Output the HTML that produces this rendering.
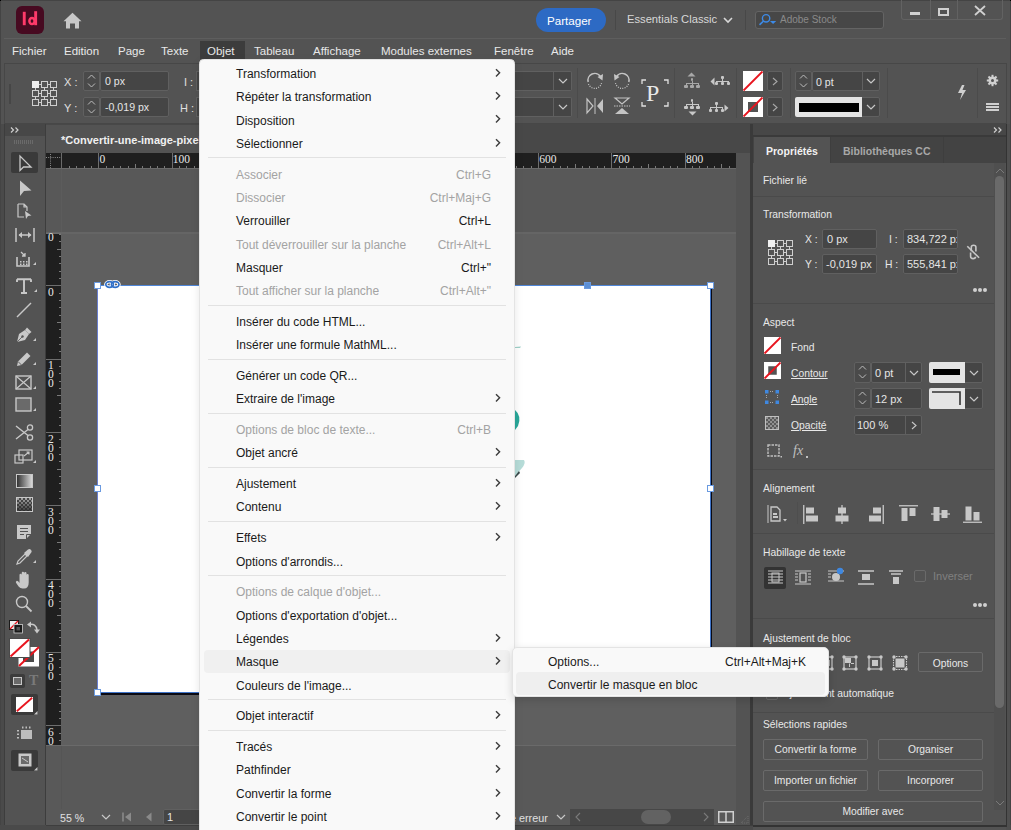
<!DOCTYPE html><html><head><meta charset="utf-8"><style>
*{margin:0;padding:0;box-sizing:border-box}
html,body{width:1011px;height:830px;overflow:hidden;background:#535353;font-family:"Liberation Sans",sans-serif;color:#e6e6e6}
.a{position:absolute}
.t{position:absolute;white-space:nowrap;line-height:1}
svg{position:absolute;overflow:visible}
</style></head><body><div class="a" style="left:0px;top:0px;width:1011px;height:830px;background:#535353"></div><div class="a" style="left:0px;top:0px;width:1px;height:830px;background:#444"></div><div class="a" style="left:0px;top:0px;width:1011px;height:1px;background:#444"></div><div class="a" style="left:1010px;top:0px;width:1px;height:830px;background:#444"></div><div class="a" style="left:0px;top:0px;width:1px;height:1px;background:#000"></div><div class="a" style="left:1010px;top:0px;width:1px;height:1px;background:#000"></div><div class="a" style="left:4px;top:38px;width:1002px;height:1px;background:#5e5e5e"></div><div class="a" style="left:16px;top:6px;width:28px;height:28px;background:#470a21;border-radius:6px"></div><svg style="left:16px;top:6px" width="28" height="28"><rect x="6.8" y="5.8" width="2.9" height="13.4" fill="#ff3a6a"/><rect x="18.2" y="5.2" width="2.9" height="14" fill="#ff3a6a"/><ellipse cx="16" cy="15" rx="2.6" ry="3.1" stroke="#ff3a6a" stroke-width="2.5" fill="none"/></svg><svg style="left:63px;top:12px" width="19" height="17" viewBox="0 0 19 17"><path d="M9.5 0.8 L18.5 9.3 L16 9.3 L16 16.5 L12 16.5 L12 11.5 L7 11.5 L7 16.5 L3 16.5 L3 9.3 L0.5 9.3 Z" fill="#c8c8c8"/></svg><div class="a" style="left:536px;top:8px;width:70px;height:24px;background:#2d6ac4;border-radius:12px"></div><div class="t" style="left:547px;top:15px;font-size:11.6px;color:#fff">Partager</div><div class="a" style="left:615px;top:10px;width:1px;height:20px;background:#484848"></div><div class="t" style="left:627px;top:14px;font-size:11.2px;color:#d8d8d8">Essentials Classic</div><svg style="left:723px;top:17px" width="10" height="6"><path d="M1 1 L5 5 L9 1" stroke="#d8d8d8" stroke-width="1.6" fill="none"/></svg><div class="a" style="left:745px;top:10px;width:1px;height:20px;background:#484848"></div><div class="a" style="left:755px;top:10.5px;width:129px;height:18.5px;background:#474747;border:1px solid #646464;border-radius:3px"></div><svg style="left:758px;top:13px" width="20" height="14"><circle cx="8.1" cy="5.3" r="3.7" stroke="#3d8ae6" stroke-width="1.4" fill="none"/><path d="M5.5 8 L1.5 11.8" stroke="#3d8ae6" stroke-width="1.6"/><path d="M12 7.9 L18.2 7.9 L15.1 11 Z" fill="#3d8ae6"/></svg><div class="t" style="left:780px;top:15px;font-size:10px;color:#8a8a8a">Adobe Stock</div><div class="a" style="left:901px;top:0px;width:102px;height:20px;border:1px solid #626262;border-top:none;border-radius:0 0 3px 3px"></div><div class="a" style="left:930px;top:0px;width:1px;height:20px;background:#626262"></div><div class="a" style="left:957px;top:0px;width:1px;height:20px;background:#626262"></div><div class="a" style="left:910px;top:12px;width:10px;height:3px;background:#d0d0d0"></div><div class="a" style="left:938px;top:7.5px;width:10.5px;height:8px;border:2px solid #d0d0d0"></div><svg style="left:974px;top:5px" width="12" height="11"><path d="M1 1 L11 10 M11 1 L1 10" stroke="#d0d0d0" stroke-width="1.8"/></svg><div class="a" style="left:200px;top:41px;width:45px;height:18px;background:#3c3c3c"></div><div class="t" style="left:12px;top:45.5px;font-size:11.5px;color:#e8e8e8">Fichier</div><div class="t" style="left:64px;top:45.5px;font-size:11.5px;color:#e8e8e8">Edition</div><div class="t" style="left:118px;top:45.5px;font-size:11.5px;color:#e8e8e8">Page</div><div class="t" style="left:161px;top:45.5px;font-size:11.5px;color:#e8e8e8">Texte</div><div class="t" style="left:207px;top:45.5px;font-size:11.5px;color:#e8e8e8">Objet</div><div class="t" style="left:254px;top:45.5px;font-size:11.5px;color:#e8e8e8">Tableau</div><div class="t" style="left:313px;top:45.5px;font-size:11.5px;color:#e8e8e8">Affichage</div><div class="t" style="left:381px;top:45.5px;font-size:11.5px;color:#e8e8e8">Modules externes</div><div class="t" style="left:494px;top:45.5px;font-size:11.5px;color:#e8e8e8">Fenêtre</div><div class="t" style="left:551px;top:45.5px;font-size:11.5px;color:#e8e8e8">Aide</div><div class="a" style="left:4px;top:63px;width:1003px;height:61px;background:#535353;border:1px solid #474747"></div><div class="a" style="left:9px;top:84px;width:2px;height:20px;background:#464646"></div><div class="a" style="left:32px;top:81px;width:7px;height:7px;background:#f0f0f0"></div><div class="a" style="left:41px;top:81px;width:7px;height:7px;border:1px solid #cfcfcf"></div><div class="a" style="left:50px;top:81px;width:7px;height:7px;border:1px solid #cfcfcf"></div><div class="a" style="left:32px;top:90px;width:7px;height:7px;border:1px solid #cfcfcf"></div><div class="a" style="left:41px;top:90px;width:7px;height:7px;border:1px solid #cfcfcf"></div><div class="a" style="left:50px;top:90px;width:7px;height:7px;border:1px solid #cfcfcf"></div><div class="a" style="left:32px;top:99px;width:7px;height:7px;border:1px solid #cfcfcf"></div><div class="a" style="left:41px;top:99px;width:7px;height:7px;border:1px solid #cfcfcf"></div><div class="a" style="left:50px;top:99px;width:7px;height:7px;border:1px solid #cfcfcf"></div><div class="a" style="left:39px;top:84px;width:2px;height:1px;background:#cfcfcf"></div><div class="a" style="left:48px;top:84px;width:2px;height:1px;background:#cfcfcf"></div><div class="a" style="left:39px;top:93px;width:2px;height:1px;background:#cfcfcf"></div><div class="a" style="left:48px;top:93px;width:2px;height:1px;background:#cfcfcf"></div><div class="a" style="left:39px;top:102px;width:2px;height:1px;background:#cfcfcf"></div><div class="a" style="left:48px;top:102px;width:2px;height:1px;background:#cfcfcf"></div><div class="a" style="left:35px;top:88px;width:1px;height:2px;background:#cfcfcf"></div><div class="a" style="left:35px;top:97px;width:1px;height:2px;background:#cfcfcf"></div><div class="a" style="left:44px;top:88px;width:1px;height:2px;background:#cfcfcf"></div><div class="a" style="left:44px;top:97px;width:1px;height:2px;background:#cfcfcf"></div><div class="a" style="left:53px;top:88px;width:1px;height:2px;background:#cfcfcf"></div><div class="a" style="left:53px;top:97px;width:1px;height:2px;background:#cfcfcf"></div><div class="t" style="left:64px;top:76.5px;font-size:11px;color:#e0e0e0">X :</div><div class="t" style="left:64px;top:102.5px;font-size:11px;color:#e0e0e0">Y :</div><div class="a" style="left:83px;top:71px;width:17px;height:20px;background:#4a4a4a;border:1px solid #606060;border-radius:2px"></div><svg style="left:87px;top:74px" width="9" height="14"><path d="M1 4.5 L4.5 1 L8 4.5 M1 9.5 L4.5 13 L8 9.5" stroke="#bdbdbd" stroke-width="1" fill="none"/></svg><div class="a" style="left:83px;top:97px;width:17px;height:20px;background:#4a4a4a;border:1px solid #606060;border-radius:2px"></div><svg style="left:87px;top:100px" width="9" height="14"><path d="M1 4.5 L4.5 1 L8 4.5 M1 9.5 L4.5 13 L8 9.5" stroke="#bdbdbd" stroke-width="1" fill="none"/></svg><div class="a" style="left:100px;top:71px;width:69px;height:20px;background:#454545;border:1px solid #606060;border-radius:2px"></div><div class="t" style="left:105px;top:76px;font-size:10.6px;color:#e6e6e6">0 px</div><div class="a" style="left:100px;top:97px;width:69px;height:20px;background:#454545;border:1px solid #606060;border-radius:2px"></div><div class="t" style="left:105px;top:102px;font-size:10.6px;color:#e6e6e6">-0,019 px</div><div class="t" style="left:184px;top:76.5px;font-size:11px;color:#e0e0e0">I :</div><div class="t" style="left:180px;top:102.5px;font-size:11px;color:#e0e0e0">H :</div><div class="a" style="left:196px;top:71px;width:5px;height:20px;background:#454545;border:1px solid #606060;border-right:none"></div><div class="a" style="left:196px;top:97px;width:5px;height:20px;background:#454545;border:1px solid #606060;border-right:none"></div><div class="a" style="left:514px;top:71px;width:58px;height:20px;background:#454545;border:1px solid #606060;border-left:none;border-radius:0 2px 2px 0"></div><div class="a" style="left:553px;top:71px;width:1px;height:20px;background:#606060"></div><svg style="left:558px;top:78px" width="10" height="6"><path d="M1 1 L5 5 L9 1" stroke="#c8c8c8" stroke-width="1.2" fill="none"/></svg><div class="a" style="left:514px;top:97px;width:58px;height:20px;background:#454545;border:1px solid #606060;border-left:none;border-radius:0 2px 2px 0"></div><div class="a" style="left:553px;top:97px;width:1px;height:20px;background:#606060"></div><svg style="left:558px;top:104px" width="10" height="6"><path d="M1 1 L5 5 L9 1" stroke="#c8c8c8" stroke-width="1.2" fill="none"/></svg><div class="a" style="left:577px;top:68px;width:1px;height:50px;background:#4b4b4b"></div><svg style="left:586px;top:72px" width="18" height="18"><path d="M2.2 10 A6.8 6.8 0 0 1 14.5 4.6" stroke="#c4c4c4" stroke-width="1.5" fill="none"/><path d="M2.5 12 A6.8 6.8 0 0 0 15.6 10.5" stroke="#c4c4c4" stroke-width="1.2" fill="none" stroke-dasharray="1 1.3"/><path d="M11.5 5 L17 2 L16.5 8.5 Z" fill="#c4c4c4"/></svg><svg style="left:613px;top:72px" width="18" height="18"><path d="M15.8 10 A6.8 6.8 0 0 0 3.5 4.6" stroke="#c4c4c4" stroke-width="1.5" fill="none"/><path d="M15.5 12 A6.8 6.8 0 0 1 2.4 10.5" stroke="#c4c4c4" stroke-width="1.2" fill="none" stroke-dasharray="1 1.3"/><path d="M6.5 5 L1 2 L1.5 8.5 Z" fill="#c4c4c4"/></svg><svg style="left:586px;top:97px" width="18" height="18"><path d="M1 2 L7 9 L1 16 Z" stroke="#c4c4c4" stroke-width="1.2" fill="none"/><path d="M9 1 L9 17" stroke="#c4c4c4" stroke-width="1"/><path d="M17 2 L11 9 L17 16 Z" fill="#c4c4c4"/></svg><svg style="left:613px;top:97px" width="18" height="18"><path d="M2 1 L16 1 L9 7 Z" stroke="#c4c4c4" stroke-width="1.2" fill="none"/><path d="M1 9 L17 9" stroke="#c4c4c4" stroke-width="1" stroke-dasharray="1.5 1"/><path d="M2 17 L16 17 L9 11 Z" fill="#c4c4c4"/></svg><svg style="left:641px;top:79px" width="28" height="28"><path d="M1 5 L1 1 L5 1 M23 1 L27 1 L27 5 M27 23 L27 27 L23 27 M5 27 L1 27 L1 23" stroke="#e0e0e0" stroke-width="1.3" fill="none"/></svg><div class="t" style="left:646px;top:81px;font-family:'Liberation Serif',serif;font-size:24px;color:#e8e8e8">P</div><div class="a" style="left:674px;top:68px;width:1px;height:50px;background:#4b4b4b"></div><div class="a" style="left:690.7px;top:78px;width:2.6px;height:3.4px;border-radius:1px;background:#a8a8a8"></div><div class="a" style="left:691.5px;top:81.4px;width:1px;height:2px;background:#a8a8a8"></div><div class="a" style="left:685.5px;top:83px;width:13px;height:1.1px;background:#a8a8a8"></div><div class="a" style="left:685.5px;top:83px;width:1px;height:1.5px;background:#a8a8a8"></div><div class="a" style="left:684.4px;top:84.5px;width:3.2px;height:3.3px;border-radius:1px;background:#a8a8a8"></div><div class="a" style="left:691.5px;top:83px;width:1px;height:1.5px;background:#a8a8a8"></div><div class="a" style="left:690.4px;top:84.5px;width:3.2px;height:3.3px;border-radius:1px;background:#a8a8a8"></div><div class="a" style="left:697.5px;top:83px;width:1px;height:1.5px;background:#a8a8a8"></div><div class="a" style="left:696.4px;top:84.5px;width:3.2px;height:3.3px;border-radius:1px;background:#a8a8a8"></div><svg style="left:687px;top:72px" width="9" height="5"><path d="M0.5 4.5 L4.5 0.5 L8.5 4.5 Z" fill="#a8a8a8"/></svg><div class="a" style="left:721.2px;top:75.5px;width:2.6px;height:3.4px;border-radius:1px;background:#c8c8c8"></div><div class="a" style="left:722.0px;top:78.9px;width:1px;height:2px;background:#c8c8c8"></div><div class="a" style="left:716.0px;top:80.5px;width:13px;height:1.1px;background:#c8c8c8"></div><div class="a" style="left:716.0px;top:80.5px;width:1px;height:1.5px;background:#c8c8c8"></div><div class="a" style="left:714.9px;top:82.0px;width:3.2px;height:3.3px;border-radius:1px;background:#c8c8c8"></div><div class="a" style="left:722.0px;top:80.5px;width:1px;height:1.5px;background:#c8c8c8"></div><div class="a" style="left:720.9px;top:82.0px;width:3.2px;height:3.3px;border-radius:1px;background:#c8c8c8"></div><div class="a" style="left:728.0px;top:80.5px;width:1px;height:1.5px;background:#c8c8c8"></div><div class="a" style="left:726.9px;top:82.0px;width:3.2px;height:3.3px;border-radius:1px;background:#c8c8c8"></div><svg style="left:710px;top:77px" width="5" height="9"><path d="M4.5 0.5 L0.5 4.5 L4.5 8.5 Z" fill="#c8c8c8"/></svg><div class="a" style="left:690.7px;top:99px;width:2.6px;height:3.4px;border-radius:1px;background:#c8c8c8"></div><div class="a" style="left:691.5px;top:102.4px;width:1px;height:2px;background:#c8c8c8"></div><div class="a" style="left:685.5px;top:104px;width:13px;height:1.1px;background:#c8c8c8"></div><div class="a" style="left:685.5px;top:104px;width:1px;height:1.5px;background:#c8c8c8"></div><div class="a" style="left:684.4px;top:105.5px;width:3.2px;height:3.3px;border-radius:1px;background:#c8c8c8"></div><div class="a" style="left:691.5px;top:104px;width:1px;height:1.5px;background:#c8c8c8"></div><div class="a" style="left:690.4px;top:105.5px;width:3.2px;height:3.3px;border-radius:1px;background:#c8c8c8"></div><div class="a" style="left:697.5px;top:104px;width:1px;height:1.5px;background:#c8c8c8"></div><div class="a" style="left:696.4px;top:105.5px;width:3.2px;height:3.3px;border-radius:1px;background:#c8c8c8"></div><svg style="left:688px;top:111px" width="9" height="5"><path d="M0.5 0.5 L4.5 4.5 L8.5 0.5 Z" fill="#c8c8c8"/></svg><div class="a" style="left:715.2px;top:102px;width:2.6px;height:3.4px;border-radius:1px;background:#c8c8c8"></div><div class="a" style="left:716.0px;top:105.4px;width:1px;height:2px;background:#c8c8c8"></div><div class="a" style="left:710.0px;top:107px;width:13px;height:1.1px;background:#c8c8c8"></div><div class="a" style="left:710.0px;top:107px;width:1px;height:1.5px;background:#c8c8c8"></div><div class="a" style="left:708.9px;top:108.5px;width:3.2px;height:3.3px;border-radius:1px;background:#c8c8c8"></div><div class="a" style="left:716.0px;top:107px;width:1px;height:1.5px;background:#c8c8c8"></div><div class="a" style="left:714.9px;top:108.5px;width:3.2px;height:3.3px;border-radius:1px;background:#c8c8c8"></div><div class="a" style="left:722.0px;top:107px;width:1px;height:1.5px;background:#c8c8c8"></div><div class="a" style="left:720.9px;top:108.5px;width:3.2px;height:3.3px;border-radius:1px;background:#c8c8c8"></div><svg style="left:724px;top:104px" width="5" height="8"><path d="M0.5 0.5 L4.5 4 L0.5 7.5 Z" fill="#c8c8c8"/></svg><div class="a" style="left:736px;top:68px;width:1px;height:50px;background:#4b4b4b"></div><svg style="left:743px;top:71px" width="20" height="20"><rect x="0" y="0" width="20" height="20" fill="#ffffff"/><path d="M0.5 19.5 L19.5 0.5" stroke="#e8141e" stroke-width="1.8"/></svg><svg style="left:743px;top:97px" width="20" height="20"><rect x="0" y="0" width="20" height="20" fill="#ffffff"/><rect x="5.0" y="5.0" width="10.0" height="10.0" fill="#535353"/><path d="M0.5 19.5 L19.5 0.5" stroke="#e8141e" stroke-width="1.8"/></svg><div class="a" style="left:767px;top:71px;width:16px;height:20px;background:#454545;border:1px solid #606060;border-radius:2px"></div><svg style="left:771.5px;top:77px" width="6" height="9"><path d="M1 1 L5 4.5 L1 8" stroke="#a8a8a8" stroke-width="1.1" fill="none"/></svg><div class="a" style="left:767px;top:97px;width:16px;height:20px;background:#454545;border:1px solid #606060;border-radius:2px"></div><svg style="left:771.5px;top:103px" width="6" height="9"><path d="M1 1 L5 4.5 L1 8" stroke="#a8a8a8" stroke-width="1.1" fill="none"/></svg><div class="a" style="left:790px;top:68px;width:1px;height:50px;background:#4b4b4b"></div><div class="a" style="left:795px;top:71px;width:17px;height:20px;background:#4a4a4a;border:1px solid #606060;border-radius:2px"></div><svg style="left:799px;top:74px" width="9" height="14"><path d="M1 4.5 L4.5 1 L8 4.5 M1 9.5 L4.5 13 L8 9.5" stroke="#bdbdbd" stroke-width="1" fill="none"/></svg><div class="a" style="left:812px;top:71px;width:68px;height:20px;background:#454545;border:1px solid #606060;border-radius:2px"></div><div class="a" style="left:862px;top:71px;width:1px;height:20px;background:#606060"></div><div class="t" style="left:816px;top:76.5px;font-size:10.6px;color:#e6e6e6">0 pt</div><svg style="left:866px;top:78px" width="10" height="6"><path d="M1 1 L5 5 L9 1" stroke="#c8c8c8" stroke-width="1.2" fill="none"/></svg><div class="a" style="left:795px;top:97px;width:85px;height:20px;background:#454545;border:1px solid #606060;border-radius:2px"></div><div class="a" style="left:795px;top:97px;width:67px;height:20px;background:#e4e4e4;border-radius:2px 0 0 2px"></div><div class="a" style="left:799px;top:103px;width:60px;height:9px;background:#000"></div><svg style="left:866px;top:104px" width="10" height="6"><path d="M1 1 L5 5 L9 1" stroke="#c8c8c8" stroke-width="1.2" fill="none"/></svg><div class="a" style="left:887px;top:68px;width:1px;height:50px;background:#4b4b4b"></div><svg style="left:956px;top:84px" width="12" height="17"><path d="M6 1 L2 9 L6 9 L4 16 L10 6 L6.5 6 L8.5 1" fill="#cfcfcf"/></svg><div class="a" style="left:977px;top:68px;width:1px;height:50px;background:#4b4b4b"></div><svg style="left:986px;top:74px" width="13" height="13"><g fill="#d0d0d0"><circle cx="6.5" cy="6.5" r="4"/><rect x="5.5" y="0.8" width="2" height="11.4"/><rect x="0.8" y="5.5" width="11.4" height="2"/><rect x="5.5" y="0.8" width="2" height="11.4" transform="rotate(45 6.5 6.5)"/><rect x="5.5" y="0.8" width="2" height="11.4" transform="rotate(-45 6.5 6.5)"/></g><circle cx="6.5" cy="6.5" r="1.5" fill="#535353"/></svg><div class="a" style="left:986px;top:103px;width:12.5px;height:1.6px;background:#cfcfcf"></div><div class="a" style="left:986px;top:106.2px;width:12.5px;height:1.6px;background:#cfcfcf"></div><div class="a" style="left:986px;top:109.3px;width:12.5px;height:1.6px;background:#cfcfcf"></div><div class="a" style="left:1px;top:124px;width:4px;height:706px;background:#4a4a4a"></div><div class="a" style="left:4px;top:124px;width:1px;height:706px;background:#3d3d3d"></div><div class="a" style="left:45px;top:124px;width:1px;height:706px;background:#3d3d3d"></div><div class="a" style="left:5px;top:124px;width:40px;height:12px;background:#474747"></div><svg style="left:10px;top:127px" width="10" height="6"><path d="M1 0.5 L3.5 3 L1 5.5 M5.5 0.5 L8 3 L5.5 5.5" stroke="#cfcfcf" stroke-width="1.2" fill="none"/></svg><div class="a" style="left:14px;top:140px;width:1px;height:4px;background:#6a6a6a"></div><div class="a" style="left:16px;top:140px;width:1px;height:4px;background:#6a6a6a"></div><div class="a" style="left:18px;top:140px;width:1px;height:4px;background:#6a6a6a"></div><div class="a" style="left:20px;top:140px;width:1px;height:4px;background:#6a6a6a"></div><div class="a" style="left:22px;top:140px;width:1px;height:4px;background:#6a6a6a"></div><div class="a" style="left:24px;top:140px;width:1px;height:4px;background:#6a6a6a"></div><div class="a" style="left:26px;top:140px;width:1px;height:4px;background:#6a6a6a"></div><div class="a" style="left:28px;top:140px;width:1px;height:4px;background:#6a6a6a"></div><div class="a" style="left:30px;top:140px;width:1px;height:4px;background:#6a6a6a"></div><div class="a" style="left:32px;top:140px;width:1px;height:4px;background:#6a6a6a"></div><div class="a" style="left:11px;top:152px;width:27px;height:21px;background:#3a3a3a;border-radius:2px"></div><svg style="left:19px;top:155px" width="13" height="17" viewBox="0 0 13 17"><path d="M1 1 L1 15.5 L4.5 12 L12 12 Z" stroke="#c8c8c8" stroke-width="1.3" fill="none" stroke-linejoin="miter"/></svg><svg style="left:19px;top:180px" width="13" height="17" viewBox="0 0 13 17"><path d="M1 0.5 L12.5 10.5 L5 11 L1 16 Z" fill="#c8c8c8"/></svg><svg style="left:17px;top:203px" width="15" height="16" viewBox="0 0 15 16"><path d="M1 1 L7 1 L10 4 L10 8 M1 1 L1 14 L7 14 M7 1 L7 4 L10 4" stroke="#c8c8c8" stroke-width="1.2" fill="none"/><path d="M8 8 L14.5 12.5 L11 13 L9 16 Z" fill="#c8c8c8"/></svg><svg style="left:15px;top:228px" width="20" height="14" viewBox="0 0 20 14"><path d="M1 0 L1 14 M19 0 L19 14 M4 7 L16 7" stroke="#c8c8c8" stroke-width="1.5"/><path d="M3.5 7 L7 4 L7 10 Z M16.5 7 L13 4 L13 10 Z" fill="#c8c8c8"/></svg><svg style="left:15px;top:251px" width="21" height="17" viewBox="0 0 21 17"><path d="M2 6 L2 15 L14 15 L14 6" stroke="#c8c8c8" stroke-width="1.6" fill="none"/><path d="M6 1 L10 5 M10 2 L10 5 L7 5" stroke="#c8c8c8" stroke-width="1.3" fill="none"/><path d="M5 10h1.5v1.5h-1.5zM8 10h1.5v1.5h-1.5zM11 10h1.5v1.5h-1.5zM5 12.5h1.5v1.5h-1.5zM8 12.5h1.5v1.5h-1.5zM11 12.5h1.5v1.5h-1.5z" fill="#c8c8c8"/><path d="M18 14 L21 14 L21 11 Z" fill="#c8c8c8"/></svg><svg style="left:16px;top:278px" width="21" height="17" viewBox="0 0 21 17"><path d="M1 1.2 L15 1.2 M8 1.2 L8 15 M1 1.2 L1 4 M15 1.2 L15 4 M5 15 L11 15" stroke="#c8c8c8" stroke-width="1.9" fill="none"/><path d="M18 14 L21 14 L21 11 Z" fill="#c8c8c8"/></svg><svg style="left:16px;top:302px" width="16" height="16" viewBox="0 0 16 16"><path d="M1 15 L15 1" stroke="#c8c8c8" stroke-width="1.4"/></svg><svg style="left:15px;top:327px" width="21" height="17" viewBox="0 0 21 17"><path d="M2 15 L4 7 L10 3 L14 7 L10 13 Z" fill="#c8c8c8"/><path d="M10 3 L12 0.5 L16.5 5 L14 7 Z" fill="#c8c8c8"/><circle cx="7.5" cy="9.5" r="1.2" fill="#535353"/><path d="M2 15 L7.5 9.5" stroke="#535353" stroke-width="0.8"/><path d="M18 14 L21 14 L21 11 Z" fill="#c8c8c8"/></svg><svg style="left:15px;top:351px" width="21" height="17" viewBox="0 0 21 17"><path d="M2 15 L3 10.5 L12 1.5 L15.5 5 L6.5 14 Z" fill="#c8c8c8"/><path d="M3 10.5 L6.5 14" stroke="#535353" stroke-width="0.9"/><path d="M18 14 L21 14 L21 11 Z" fill="#c8c8c8"/></svg><svg style="left:15px;top:374.5px" width="21" height="17" viewBox="0 0 21 17"><rect x="1" y="1" width="15" height="13" stroke="#c8c8c8" stroke-width="1.4" fill="none"/><path d="M1 1 L16 14 M16 1 L1 14" stroke="#c8c8c8" stroke-width="1.2"/><path d="M18 14 L21 14 L21 11 Z" fill="#c8c8c8"/></svg><svg style="left:15px;top:397px" width="21" height="17" viewBox="0 0 21 17"><rect x="1" y="1" width="15" height="13" stroke="#c8c8c8" stroke-width="1.4" fill="#6a6a6a"/><path d="M18 14 L21 14 L21 11 Z" fill="#c8c8c8"/></svg><svg style="left:15px;top:424px" width="19" height="17" viewBox="0 0 19 17"><circle cx="15" cy="3.5" r="2.6" stroke="#c8c8c8" stroke-width="1.3" fill="none"/><circle cx="15" cy="13.5" r="2.6" stroke="#c8c8c8" stroke-width="1.3" fill="none"/><path d="M1 2 L13 11.5 M1 15 L13 5.5" stroke="#c8c8c8" stroke-width="1.4"/></svg><svg style="left:14px;top:447px" width="22" height="18" viewBox="0 0 22 18"><rect x="1" y="8" width="8" height="8" stroke="#c8c8c8" stroke-width="1.2" fill="none"/><rect x="5" y="3" width="13" height="10" stroke="#c8c8c8" stroke-width="1.2" fill="none"/><path d="M10 9 L15 5 M12.5 5 L15 5 L15 7.5" stroke="#c8c8c8" stroke-width="1.1" fill="none"/><path d="M19 16 L22 16 L22 13 Z" fill="#c8c8c8"/></svg><div class="a" style="left:16px;top:473.5px;width:17px;height:14.5px;border:1px solid #c8c8c8;background:linear-gradient(90deg,#333,#d8d8d8)"></div><div class="a" style="left:16px;top:497px;width:17px;height:14.5px;border:1px solid #c8c8c8;background-image:linear-gradient(180deg,rgba(40,40,40,0) 0%,rgba(40,40,40,0.85) 100%),linear-gradient(45deg,#4a4a4a 25%,transparent 25%,transparent 75%,#4a4a4a 75%),linear-gradient(45deg,#4a4a4a 25%,transparent 25%,transparent 75%,#4a4a4a 75%);background-color:#a8a8a8;background-size:100% 100%,4px 4px,4px 4px;background-position:0 0,0 0,2px 2px"></div><svg style="left:16px;top:524px" width="16" height="16" viewBox="0 0 16 16"><path d="M1 1 L15 1 L15 10 L10 15 L1 15 Z" fill="#c8c8c8"/><path d="M4 4.5 L12 4.5 M4 7.5 L12 7.5 M4 10.5 L8 10.5" stroke="#535353" stroke-width="1.2"/><path d="M10.5 15 L10.5 10.5 L15 10.5" stroke="#535353" stroke-width="1" fill="none"/></svg><svg style="left:15px;top:547.5px" width="21" height="18" viewBox="0 0 21 18"><path d="M2 16 L3 13 L10 6 L12 8 L5 15 Z" stroke="#c8c8c8" stroke-width="1.2" fill="none"/><path d="M9 5 L13 1.5 Q15 0.5 16 2 Q17.5 3.5 15.5 5.5 L13 9 Z" fill="#c8c8c8"/><path d="M18 15 L21 15 L21 12 Z" fill="#c8c8c8"/></svg><svg style="left:15px;top:571px" width="18" height="18" viewBox="0 0 18 18"><path d="M4.5 10 L4.5 4 Q4.5 2.8 5.6 2.8 Q6.7 2.8 6.7 4 L6.7 8.5 L6.7 2 Q6.7 0.8 7.9 0.8 Q9.1 0.8 9.1 2 L9.1 8.5 L9.1 2.2 Q9.1 1 10.3 1 Q11.5 1 11.5 2.2 L11.5 8.8 L11.5 4.2 Q11.5 3 12.6 3 Q13.7 3 13.7 4.2 L13.7 11.5 Q13.7 17.5 9 17.5 L7.5 17.5 Q5.2 17.5 3.6 15.5 L1 11.8 Q0.4 10.4 1.6 9.9 Q2.8 9.5 4.5 12 Z" fill="#c8c8c8"/></svg><svg style="left:15px;top:595px" width="18" height="17" viewBox="0 0 18 17"><circle cx="7" cy="7" r="5.5" stroke="#c8c8c8" stroke-width="1.4" fill="none"/><path d="M11 11 L16.5 16.5" stroke="#c8c8c8" stroke-width="1.8"/></svg><svg style="left:9px;top:620px" width="14" height="13" viewBox="0 0 14 13"><rect x="0.5" y="0.5" width="9" height="9" fill="#f0f0f0" stroke="#1a1a1a" stroke-width="1"/><path d="M1 9 L9 1" stroke="#e8141e" stroke-width="1.2"/><rect x="5" y="4.5" width="8.5" height="8.5" fill="#1a1a1a" stroke="#d0d0d0" stroke-width="0.8"/><rect x="7.5" y="7" width="3.5" height="3.5" fill="#535353"/></svg><svg style="left:27px;top:621px" width="13" height="13" viewBox="0 0 13 13"><path d="M2 3.5 Q9 2 10 9" stroke="#c8c8c8" stroke-width="1.5" fill="none"/><path d="M0 3.5 L4 0.5 L4 6.5 Z M10 12.5 L7 8.5 L13 8.5 Z" fill="#c8c8c8"/></svg><svg style="left:9px;top:638px" width="31" height="29" viewBox="0 0 31 29"><rect x="9.5" y="9" width="20.5" height="19.5" fill="#ffffff"/><rect x="14" y="13.5" width="11" height="10.5" fill="#4a4a4a"/><path d="M10 28 L30 9" stroke="#e8141e" stroke-width="2"/><rect x="0.5" y="0.5" width="20.5" height="19" fill="#ffffff" stroke="#4a4a4a" stroke-width="1"/><path d="M1.5 18.5 L20 1.5" stroke="#e8141e" stroke-width="2"/></svg><div class="a" style="left:10px;top:674px;width:15px;height:14px;background:#3c3c3c;border-radius:2px"></div><div class="a" style="left:13px;top:677px;width:9px;height:8px;border:1.3px solid #c8c8c8;background:#6a6a6a"></div><div class="t" style="left:29px;top:674px;font-family:'Liberation Serif',serif;font-size:14px;color:#7a7a7a;font-weight:bold">T</div><div class="a" style="left:11px;top:694px;width:27px;height:21px;background:#3a3a3a;border-radius:2px"></div><svg style="left:16px;top:697px" width="17" height="15" viewBox="0 0 17 15"><rect x="0" y="0" width="17" height="15" fill="#fff"/><path d="M0.8 14.2 L16.2 0.8" stroke="#e8141e" stroke-width="1.8"/><path d="M34 23 L37 23 L37 20 Z" fill="#c8c8c8"/></svg><svg style="left:34px;top:711px" width="4" height="4" viewBox="0 0 4 4"><path d="M0 3.5 L3.5 3.5 L3.5 0 Z" fill="#c8c8c8"/></svg><svg style="left:17px;top:726px" width="16" height="14" viewBox="0 0 16 14"><rect x="4" y="4" width="11" height="9" fill="#bdbdbd"/><path d="M0 4h2v1.5h-2zM0 7.5h2v1.5h-2zM0 11h2v1.5h-2zM5 0.5h1.5v2h-1.5zM8.5 0.5h1.5v2h-1.5zM12 0.5h1.5v2h-1.5z" fill="#bdbdbd"/></svg><div class="a" style="left:11px;top:750px;width:27px;height:21px;background:#3a3a3a;border-radius:2px"></div><svg style="left:18px;top:753px" width="14" height="14" viewBox="0 0 14 14"><rect x="0.5" y="0.5" width="13" height="13" fill="#c8c8c8"/><rect x="3" y="3" width="8" height="8" fill="#6a6a6a"/><path d="M4 5 L10 9" stroke="#c8c8c8" stroke-width="1"/></svg><svg style="left:34px;top:767px" width="4" height="4" viewBox="0 0 4 4"><path d="M0 3.5 L3.5 3.5 L3.5 0 Z" fill="#c8c8c8"/></svg><div class="a" style="left:46px;top:124px;width:706px;height:29px;background:#484848"></div><div class="a" style="left:46px;top:125px;width:460px;height:28px;background:#535353"></div><div class="t" style="left:61px;top:134.8px;font-size:11px;font-weight:bold;color:#f0f0f0">*Convertir-une-image-pixel-en-vectoriel.indd @ 55 %</div><div class="a" style="left:46px;top:169px;width:690px;height:640px;background:#5f5f5f"></div><div class="a" style="left:46px;top:169px;width:690px;height:64px;background:#585858"></div><div class="a" style="left:46px;top:232px;width:690px;height:2px;background:#656565"></div><div class="a" style="left:61px;top:169px;width:1px;height:63px;background:#5c5c5c"></div><div class="a" style="left:46px;top:745px;width:690px;height:1px;background:#6a6a6a"></div><div class="a" style="left:46px;top:746px;width:690px;height:63px;background:#595959"></div><div class="a" style="left:61px;top:746px;width:1px;height:63px;background:#555"></div><div class="a" style="left:736px;top:153px;width:16px;height:656px;background:#535353"></div><div class="a" style="left:750px;top:124px;width:3px;height:706px;background:#3a3a3a"></div><div class="a" style="left:46px;top:153px;width:690px;height:16px;background:#1f1f1f"></div><div class="a" style="left:46px;top:168px;width:690px;height:1px;background:#6a6a6a"></div><div class="a" style="left:61px;top:153px;width:1px;height:16px;background:#6a6a6a"></div><svg style="left:46px;top:153px" width="16" height="16"><path d="M4.5 1 L4.5 16 M0 4.5 L15 4.5" stroke="#8a8a8a" stroke-width="1" stroke-dasharray="1 1.2"/></svg><div class="a" style="left:68.9px;top:166px;width:1px;height:2px;background:#7a7a7a"></div><div class="a" style="left:76.2px;top:166px;width:1px;height:2px;background:#7a7a7a"></div><div class="a" style="left:83.5px;top:166px;width:1px;height:2px;background:#7a7a7a"></div><div class="a" style="left:90.9px;top:166px;width:1px;height:2px;background:#7a7a7a"></div><div class="a" style="left:98.2px;top:153px;width:1px;height:16px;background:#6e6e6e"></div><div class="a" style="left:105.5px;top:166px;width:1px;height:2px;background:#7a7a7a"></div><div class="a" style="left:112.9px;top:166px;width:1px;height:2px;background:#7a7a7a"></div><div class="a" style="left:120.2px;top:166px;width:1px;height:2px;background:#7a7a7a"></div><div class="a" style="left:127.5px;top:166px;width:1px;height:2px;background:#7a7a7a"></div><div class="a" style="left:134.8px;top:164px;width:1px;height:4px;background:#7a7a7a"></div><div class="a" style="left:142.2px;top:166px;width:1px;height:2px;background:#7a7a7a"></div><div class="a" style="left:149.5px;top:166px;width:1px;height:2px;background:#7a7a7a"></div><div class="a" style="left:156.8px;top:166px;width:1px;height:2px;background:#7a7a7a"></div><div class="a" style="left:164.2px;top:166px;width:1px;height:2px;background:#7a7a7a"></div><div class="a" style="left:171.5px;top:153px;width:1px;height:16px;background:#6e6e6e"></div><div class="a" style="left:178.8px;top:166px;width:1px;height:2px;background:#7a7a7a"></div><div class="a" style="left:186.2px;top:166px;width:1px;height:2px;background:#7a7a7a"></div><div class="a" style="left:193.5px;top:166px;width:1px;height:2px;background:#7a7a7a"></div><div class="a" style="left:200.8px;top:166px;width:1px;height:2px;background:#7a7a7a"></div><div class="a" style="left:208.2px;top:164px;width:1px;height:4px;background:#7a7a7a"></div><div class="a" style="left:215.5px;top:166px;width:1px;height:2px;background:#7a7a7a"></div><div class="a" style="left:222.8px;top:166px;width:1px;height:2px;background:#7a7a7a"></div><div class="a" style="left:230.1px;top:166px;width:1px;height:2px;background:#7a7a7a"></div><div class="a" style="left:237.5px;top:166px;width:1px;height:2px;background:#7a7a7a"></div><div class="a" style="left:244.8px;top:153px;width:1px;height:16px;background:#6e6e6e"></div><div class="a" style="left:252.1px;top:166px;width:1px;height:2px;background:#7a7a7a"></div><div class="a" style="left:259.5px;top:166px;width:1px;height:2px;background:#7a7a7a"></div><div class="a" style="left:266.8px;top:166px;width:1px;height:2px;background:#7a7a7a"></div><div class="a" style="left:274.1px;top:166px;width:1px;height:2px;background:#7a7a7a"></div><div class="a" style="left:281.4px;top:164px;width:1px;height:4px;background:#7a7a7a"></div><div class="a" style="left:288.8px;top:166px;width:1px;height:2px;background:#7a7a7a"></div><div class="a" style="left:296.1px;top:166px;width:1px;height:2px;background:#7a7a7a"></div><div class="a" style="left:303.4px;top:166px;width:1px;height:2px;background:#7a7a7a"></div><div class="a" style="left:310.8px;top:166px;width:1px;height:2px;background:#7a7a7a"></div><div class="a" style="left:318.1px;top:153px;width:1px;height:16px;background:#6e6e6e"></div><div class="a" style="left:325.4px;top:166px;width:1px;height:2px;background:#7a7a7a"></div><div class="a" style="left:332.8px;top:166px;width:1px;height:2px;background:#7a7a7a"></div><div class="a" style="left:340.1px;top:166px;width:1px;height:2px;background:#7a7a7a"></div><div class="a" style="left:347.4px;top:166px;width:1px;height:2px;background:#7a7a7a"></div><div class="a" style="left:354.8px;top:164px;width:1px;height:4px;background:#7a7a7a"></div><div class="a" style="left:362.1px;top:166px;width:1px;height:2px;background:#7a7a7a"></div><div class="a" style="left:369.4px;top:166px;width:1px;height:2px;background:#7a7a7a"></div><div class="a" style="left:376.7px;top:166px;width:1px;height:2px;background:#7a7a7a"></div><div class="a" style="left:384.1px;top:166px;width:1px;height:2px;background:#7a7a7a"></div><div class="a" style="left:391.4px;top:153px;width:1px;height:16px;background:#6e6e6e"></div><div class="a" style="left:398.7px;top:166px;width:1px;height:2px;background:#7a7a7a"></div><div class="a" style="left:406.1px;top:166px;width:1px;height:2px;background:#7a7a7a"></div><div class="a" style="left:413.4px;top:166px;width:1px;height:2px;background:#7a7a7a"></div><div class="a" style="left:420.7px;top:166px;width:1px;height:2px;background:#7a7a7a"></div><div class="a" style="left:428.1px;top:164px;width:1px;height:4px;background:#7a7a7a"></div><div class="a" style="left:435.4px;top:166px;width:1px;height:2px;background:#7a7a7a"></div><div class="a" style="left:442.7px;top:166px;width:1px;height:2px;background:#7a7a7a"></div><div class="a" style="left:450.0px;top:166px;width:1px;height:2px;background:#7a7a7a"></div><div class="a" style="left:457.4px;top:166px;width:1px;height:2px;background:#7a7a7a"></div><div class="a" style="left:464.7px;top:153px;width:1px;height:16px;background:#6e6e6e"></div><div class="a" style="left:472.0px;top:166px;width:1px;height:2px;background:#7a7a7a"></div><div class="a" style="left:479.4px;top:166px;width:1px;height:2px;background:#7a7a7a"></div><div class="a" style="left:486.7px;top:166px;width:1px;height:2px;background:#7a7a7a"></div><div class="a" style="left:494.0px;top:166px;width:1px;height:2px;background:#7a7a7a"></div><div class="a" style="left:501.3px;top:164px;width:1px;height:4px;background:#7a7a7a"></div><div class="a" style="left:508.7px;top:166px;width:1px;height:2px;background:#7a7a7a"></div><div class="a" style="left:516.0px;top:166px;width:1px;height:2px;background:#7a7a7a"></div><div class="a" style="left:523.3px;top:166px;width:1px;height:2px;background:#7a7a7a"></div><div class="a" style="left:530.7px;top:166px;width:1px;height:2px;background:#7a7a7a"></div><div class="a" style="left:538.0px;top:153px;width:1px;height:16px;background:#6e6e6e"></div><div class="a" style="left:545.3px;top:166px;width:1px;height:2px;background:#7a7a7a"></div><div class="a" style="left:552.7px;top:166px;width:1px;height:2px;background:#7a7a7a"></div><div class="a" style="left:560.0px;top:166px;width:1px;height:2px;background:#7a7a7a"></div><div class="a" style="left:567.3px;top:166px;width:1px;height:2px;background:#7a7a7a"></div><div class="a" style="left:574.6px;top:164px;width:1px;height:4px;background:#7a7a7a"></div><div class="a" style="left:582.0px;top:166px;width:1px;height:2px;background:#7a7a7a"></div><div class="a" style="left:589.3px;top:166px;width:1px;height:2px;background:#7a7a7a"></div><div class="a" style="left:596.6px;top:166px;width:1px;height:2px;background:#7a7a7a"></div><div class="a" style="left:604.0px;top:166px;width:1px;height:2px;background:#7a7a7a"></div><div class="a" style="left:611.3px;top:153px;width:1px;height:16px;background:#6e6e6e"></div><div class="a" style="left:618.6px;top:166px;width:1px;height:2px;background:#7a7a7a"></div><div class="a" style="left:626.0px;top:166px;width:1px;height:2px;background:#7a7a7a"></div><div class="a" style="left:633.3px;top:166px;width:1px;height:2px;background:#7a7a7a"></div><div class="a" style="left:640.6px;top:166px;width:1px;height:2px;background:#7a7a7a"></div><div class="a" style="left:648.0px;top:164px;width:1px;height:4px;background:#7a7a7a"></div><div class="a" style="left:655.3px;top:166px;width:1px;height:2px;background:#7a7a7a"></div><div class="a" style="left:662.6px;top:166px;width:1px;height:2px;background:#7a7a7a"></div><div class="a" style="left:669.9px;top:166px;width:1px;height:2px;background:#7a7a7a"></div><div class="a" style="left:677.3px;top:166px;width:1px;height:2px;background:#7a7a7a"></div><div class="a" style="left:684.6px;top:153px;width:1px;height:16px;background:#6e6e6e"></div><div class="a" style="left:691.9px;top:166px;width:1px;height:2px;background:#7a7a7a"></div><div class="a" style="left:699.3px;top:166px;width:1px;height:2px;background:#7a7a7a"></div><div class="a" style="left:706.6px;top:166px;width:1px;height:2px;background:#7a7a7a"></div><div class="a" style="left:713.9px;top:166px;width:1px;height:2px;background:#7a7a7a"></div><div class="a" style="left:721.2px;top:164px;width:1px;height:4px;background:#7a7a7a"></div><div class="a" style="left:728.6px;top:166px;width:1px;height:2px;background:#7a7a7a"></div><div class="t" style="left:99.5px;top:153.8px;font-family:'Liberation Serif',serif;font-size:11.5px;color:#e8e8e8">0</div><div class="t" style="left:172.8px;top:153.8px;font-family:'Liberation Serif',serif;font-size:11.5px;color:#e8e8e8">100</div><div class="t" style="left:246.10000000000002px;top:153.8px;font-family:'Liberation Serif',serif;font-size:11.5px;color:#e8e8e8">200</div><div class="t" style="left:319.4px;top:153.8px;font-family:'Liberation Serif',serif;font-size:11.5px;color:#e8e8e8">300</div><div class="t" style="left:392.7px;top:153.8px;font-family:'Liberation Serif',serif;font-size:11.5px;color:#e8e8e8">400</div><div class="t" style="left:466.0px;top:153.8px;font-family:'Liberation Serif',serif;font-size:11.5px;color:#e8e8e8">500</div><div class="t" style="left:539.3px;top:153.8px;font-family:'Liberation Serif',serif;font-size:11.5px;color:#e8e8e8">600</div><div class="t" style="left:612.6px;top:153.8px;font-family:'Liberation Serif',serif;font-size:11.5px;color:#e8e8e8">700</div><div class="t" style="left:685.9px;top:153.8px;font-family:'Liberation Serif',serif;font-size:11.5px;color:#e8e8e8">800</div><div class="a" style="left:46px;top:233px;width:15px;height:512px;background:#1f1f1f"></div><div class="a" style="left:59px;top:234.1px;width:2px;height:1px;background:#7a7a7a"></div><div class="a" style="left:59px;top:241.4px;width:2px;height:1px;background:#7a7a7a"></div><div class="a" style="left:57px;top:248.7px;width:4px;height:1px;background:#7a7a7a"></div><div class="a" style="left:59px;top:256.1px;width:2px;height:1px;background:#7a7a7a"></div><div class="a" style="left:59px;top:263.4px;width:2px;height:1px;background:#7a7a7a"></div><div class="a" style="left:59px;top:270.7px;width:2px;height:1px;background:#7a7a7a"></div><div class="a" style="left:59px;top:278.1px;width:2px;height:1px;background:#7a7a7a"></div><div class="a" style="left:46px;top:285.4px;width:15px;height:1px;background:#6e6e6e"></div><div class="a" style="left:59px;top:292.7px;width:2px;height:1px;background:#7a7a7a"></div><div class="a" style="left:59px;top:300.1px;width:2px;height:1px;background:#7a7a7a"></div><div class="a" style="left:59px;top:307.4px;width:2px;height:1px;background:#7a7a7a"></div><div class="a" style="left:59px;top:314.7px;width:2px;height:1px;background:#7a7a7a"></div><div class="a" style="left:57px;top:322.0px;width:4px;height:1px;background:#7a7a7a"></div><div class="a" style="left:59px;top:329.4px;width:2px;height:1px;background:#7a7a7a"></div><div class="a" style="left:59px;top:336.7px;width:2px;height:1px;background:#7a7a7a"></div><div class="a" style="left:59px;top:344.0px;width:2px;height:1px;background:#7a7a7a"></div><div class="a" style="left:59px;top:351.4px;width:2px;height:1px;background:#7a7a7a"></div><div class="a" style="left:46px;top:358.7px;width:15px;height:1px;background:#6e6e6e"></div><div class="a" style="left:59px;top:366.0px;width:2px;height:1px;background:#7a7a7a"></div><div class="a" style="left:59px;top:373.4px;width:2px;height:1px;background:#7a7a7a"></div><div class="a" style="left:59px;top:380.7px;width:2px;height:1px;background:#7a7a7a"></div><div class="a" style="left:59px;top:388.0px;width:2px;height:1px;background:#7a7a7a"></div><div class="a" style="left:57px;top:395.3px;width:4px;height:1px;background:#7a7a7a"></div><div class="a" style="left:59px;top:402.7px;width:2px;height:1px;background:#7a7a7a"></div><div class="a" style="left:59px;top:410.0px;width:2px;height:1px;background:#7a7a7a"></div><div class="a" style="left:59px;top:417.3px;width:2px;height:1px;background:#7a7a7a"></div><div class="a" style="left:59px;top:424.7px;width:2px;height:1px;background:#7a7a7a"></div><div class="a" style="left:46px;top:432.0px;width:15px;height:1px;background:#6e6e6e"></div><div class="a" style="left:59px;top:439.3px;width:2px;height:1px;background:#7a7a7a"></div><div class="a" style="left:59px;top:446.7px;width:2px;height:1px;background:#7a7a7a"></div><div class="a" style="left:59px;top:454.0px;width:2px;height:1px;background:#7a7a7a"></div><div class="a" style="left:59px;top:461.3px;width:2px;height:1px;background:#7a7a7a"></div><div class="a" style="left:57px;top:468.6px;width:4px;height:1px;background:#7a7a7a"></div><div class="a" style="left:59px;top:476.0px;width:2px;height:1px;background:#7a7a7a"></div><div class="a" style="left:59px;top:483.3px;width:2px;height:1px;background:#7a7a7a"></div><div class="a" style="left:59px;top:490.6px;width:2px;height:1px;background:#7a7a7a"></div><div class="a" style="left:59px;top:498.0px;width:2px;height:1px;background:#7a7a7a"></div><div class="a" style="left:46px;top:505.3px;width:15px;height:1px;background:#6e6e6e"></div><div class="a" style="left:59px;top:512.6px;width:2px;height:1px;background:#7a7a7a"></div><div class="a" style="left:59px;top:520.0px;width:2px;height:1px;background:#7a7a7a"></div><div class="a" style="left:59px;top:527.3px;width:2px;height:1px;background:#7a7a7a"></div><div class="a" style="left:59px;top:534.6px;width:2px;height:1px;background:#7a7a7a"></div><div class="a" style="left:57px;top:542.0px;width:4px;height:1px;background:#7a7a7a"></div><div class="a" style="left:59px;top:549.3px;width:2px;height:1px;background:#7a7a7a"></div><div class="a" style="left:59px;top:556.6px;width:2px;height:1px;background:#7a7a7a"></div><div class="a" style="left:59px;top:563.9px;width:2px;height:1px;background:#7a7a7a"></div><div class="a" style="left:59px;top:571.3px;width:2px;height:1px;background:#7a7a7a"></div><div class="a" style="left:46px;top:578.6px;width:15px;height:1px;background:#6e6e6e"></div><div class="a" style="left:59px;top:585.9px;width:2px;height:1px;background:#7a7a7a"></div><div class="a" style="left:59px;top:593.3px;width:2px;height:1px;background:#7a7a7a"></div><div class="a" style="left:59px;top:600.6px;width:2px;height:1px;background:#7a7a7a"></div><div class="a" style="left:59px;top:607.9px;width:2px;height:1px;background:#7a7a7a"></div><div class="a" style="left:57px;top:615.2px;width:4px;height:1px;background:#7a7a7a"></div><div class="a" style="left:59px;top:622.6px;width:2px;height:1px;background:#7a7a7a"></div><div class="a" style="left:59px;top:629.9px;width:2px;height:1px;background:#7a7a7a"></div><div class="a" style="left:59px;top:637.2px;width:2px;height:1px;background:#7a7a7a"></div><div class="a" style="left:59px;top:644.6px;width:2px;height:1px;background:#7a7a7a"></div><div class="a" style="left:46px;top:651.9px;width:15px;height:1px;background:#6e6e6e"></div><div class="a" style="left:59px;top:659.2px;width:2px;height:1px;background:#7a7a7a"></div><div class="a" style="left:59px;top:666.6px;width:2px;height:1px;background:#7a7a7a"></div><div class="a" style="left:59px;top:673.9px;width:2px;height:1px;background:#7a7a7a"></div><div class="a" style="left:59px;top:681.2px;width:2px;height:1px;background:#7a7a7a"></div><div class="a" style="left:57px;top:688.5px;width:4px;height:1px;background:#7a7a7a"></div><div class="a" style="left:59px;top:695.9px;width:2px;height:1px;background:#7a7a7a"></div><div class="a" style="left:59px;top:703.2px;width:2px;height:1px;background:#7a7a7a"></div><div class="a" style="left:59px;top:710.5px;width:2px;height:1px;background:#7a7a7a"></div><div class="a" style="left:59px;top:717.9px;width:2px;height:1px;background:#7a7a7a"></div><div class="a" style="left:46px;top:725.2px;width:15px;height:1px;background:#6e6e6e"></div><div class="a" style="left:59px;top:732.5px;width:2px;height:1px;background:#7a7a7a"></div><div class="a" style="left:59px;top:739.9px;width:2px;height:1px;background:#7a7a7a"></div><div class="a" style="left:46px;top:233px;width:15px;height:1px;background:#6e6e6e"></div><div class="t" style="left:48px;top:231.5px;font-family:'Liberation Serif',serif;font-size:11.5px;color:#e8e8e8">0</div><div class="t" style="left:48px;top:286.9px;font-family:'Liberation Serif',serif;font-size:11.5px;color:#e8e8e8">0</div><div class="t" style="left:48px;top:360.2px;font-family:'Liberation Serif',serif;font-size:11.5px;color:#e8e8e8">1</div><div class="t" style="left:48px;top:369.2px;font-family:'Liberation Serif',serif;font-size:11.5px;color:#e8e8e8">0</div><div class="t" style="left:48px;top:378.2px;font-family:'Liberation Serif',serif;font-size:11.5px;color:#e8e8e8">0</div><div class="t" style="left:48px;top:433.5px;font-family:'Liberation Serif',serif;font-size:11.5px;color:#e8e8e8">2</div><div class="t" style="left:48px;top:442.5px;font-family:'Liberation Serif',serif;font-size:11.5px;color:#e8e8e8">0</div><div class="t" style="left:48px;top:451.5px;font-family:'Liberation Serif',serif;font-size:11.5px;color:#e8e8e8">0</div><div class="t" style="left:48px;top:506.79999999999995px;font-family:'Liberation Serif',serif;font-size:11.5px;color:#e8e8e8">3</div><div class="t" style="left:48px;top:515.8px;font-family:'Liberation Serif',serif;font-size:11.5px;color:#e8e8e8">0</div><div class="t" style="left:48px;top:524.8px;font-family:'Liberation Serif',serif;font-size:11.5px;color:#e8e8e8">0</div><div class="t" style="left:48px;top:580.0999999999999px;font-family:'Liberation Serif',serif;font-size:11.5px;color:#e8e8e8">4</div><div class="t" style="left:48px;top:589.0999999999999px;font-family:'Liberation Serif',serif;font-size:11.5px;color:#e8e8e8">0</div><div class="t" style="left:48px;top:598.0999999999999px;font-family:'Liberation Serif',serif;font-size:11.5px;color:#e8e8e8">0</div><div class="t" style="left:48px;top:653.4px;font-family:'Liberation Serif',serif;font-size:11.5px;color:#e8e8e8">5</div><div class="t" style="left:48px;top:662.4px;font-family:'Liberation Serif',serif;font-size:11.5px;color:#e8e8e8">0</div><div class="t" style="left:48px;top:671.4px;font-family:'Liberation Serif',serif;font-size:11.5px;color:#e8e8e8">0</div><div class="t" style="left:48px;top:726.6999999999999px;font-family:'Liberation Serif',serif;font-size:11.5px;color:#e8e8e8">6</div><div class="t" style="left:48px;top:735.6999999999999px;font-family:'Liberation Serif',serif;font-size:11.5px;color:#e8e8e8">0</div><div class="a" style="left:98px;top:286px;width:613px;height:407px;background:#ffffff"></div><div class="a" style="left:98px;top:285px;width:613px;height:1px;background:#4f86d8"></div><div class="a" style="left:97px;top:285px;width:1px;height:408px;background:#6a7fd0"></div><div class="a" style="left:710px;top:285px;width:1px;height:408px;background:#3f74c8"></div><div class="a" style="left:711px;top:285px;width:1px;height:409px;background:#0a0a14"></div><div class="a" style="left:98px;top:691.5px;width:613px;height:1px;background:#3f74c8"></div><div class="a" style="left:98px;top:692.5px;width:614px;height:2px;background:#0a0a14"></div><svg style="left:514px;top:330px" width="20" height="150"><path d="M1 17 L7 16.5 L6 18 L1 18 Z" fill="#9fd0c8"/><path d="M1 80 Q8 86 4 96 L1 100 Z" fill="#29a89a"/><path d="M1 130 L10 130 Q12 133 8 138 L1 146 Z" fill="#b6dcd8"/><path d="M1 146 L5 141 L6 143 L1 148 Z" fill="#3a4a4a"/></svg><div class="a" style="left:94px;top:282px;width:7px;height:7px;background:#ffffff;border:1px solid #6a9ae0"></div><div class="a" style="left:584px;top:282px;width:7px;height:7px;background:#5b8fd6;border:1px solid #6a9ae0"></div><div class="a" style="left:707px;top:282px;width:7px;height:7px;background:#ffffff;border:1px solid #6a9ae0"></div><div class="a" style="left:94px;top:485px;width:7px;height:7px;background:#ffffff;border:1px solid #6a9ae0"></div><div class="a" style="left:707px;top:485px;width:7px;height:7px;background:#ffffff;border:1px solid #6a9ae0"></div><div class="a" style="left:94px;top:689px;width:7px;height:7px;background:#ffffff;border:1px solid #6a9ae0"></div><svg style="left:103px;top:279px" width="19" height="11"><g fill="none"><ellipse cx="6.6" cy="5.5" rx="3.8" ry="2.8" stroke="#fff" stroke-width="3.4"/><ellipse cx="12.2" cy="5.5" rx="3.8" ry="2.8" stroke="#fff" stroke-width="3.4"/><ellipse cx="6.6" cy="5.5" rx="3.8" ry="2.8" stroke="#2f6fc8" stroke-width="1.7"/><ellipse cx="12.2" cy="5.5" rx="3.8" ry="2.8" stroke="#2f6fc8" stroke-width="1.7"/></g></svg><div class="a" style="left:46px;top:809px;width:690px;height:16px;background:#595959"></div><div class="a" style="left:0px;top:825px;width:1011px;height:5px;background:#4a4a4a"></div><div class="a" style="left:46px;top:825px;width:960px;height:1px;background:#3e3e3e"></div><div class="t" style="left:60px;top:813px;font-size:10.6px;color:#e0e0e0">55 %</div><svg style="left:101px;top:814px" width="10" height="6"><path d="M1 1 L5 5 L9 1" stroke="#c8c8c8" stroke-width="1.2" fill="none"/></svg><svg style="left:122px;top:812px" width="10" height="10"><path d="M1 0.5 L1 9.5" stroke="#8a8a8a" stroke-width="1.6"/><path d="M9 0.5 L3 5 L9 9.5 Z" fill="#8a8a8a"/></svg><svg style="left:145px;top:812px" width="8" height="10"><path d="M6.5 0.5 L1 5 L6.5 9.5 Z" fill="#8a8a8a"/></svg><div class="a" style="left:163px;top:809px;width:40px;height:16px;background:#454545;border:1px solid #606060;border-radius:2px"></div><div class="t" style="left:167px;top:812px;font-size:11px;color:#e6e6e6">1</div><div class="t" style="left:510px;top:813px;font-size:10.8px;color:#e0e0e0">e erreur</div><svg style="left:556px;top:814px" width="10" height="6"><path d="M1 1 L5 5 L9 1" stroke="#c8c8c8" stroke-width="1.2" fill="none"/></svg><div class="a" style="left:570px;top:809px;width:144px;height:16px;background:#474747"></div><div class="a" style="left:641px;top:810px;width:30px;height:14px;background:#626262;border-radius:7px"></div><svg style="left:575px;top:812px" width="6" height="10"><path d="M5 1 L1 5 L5 9" stroke="#7a7a7a" stroke-width="1.1" fill="none"/></svg><svg style="left:703px;top:812px" width="6" height="10"><path d="M1 1 L5 5 L1 9" stroke="#7a7a7a" stroke-width="1.1" fill="none"/></svg><svg style="left:718px;top:811px" width="16" height="12"><rect x="0.75" y="0.75" width="14.5" height="10.5" stroke="#d0d0d0" stroke-width="1.5" fill="none"/><path d="M8 0.75 L8 11.25" stroke="#d0d0d0" stroke-width="1.5"/></svg><svg style="left:740px;top:815px" width="9" height="9"><path d="M8 1 L8 8 L1 8 Z" fill="none" stroke="#6a6a6a" stroke-width="1" stroke-dasharray="1 1"/></svg><div class="a" style="left:753px;top:124px;width:253px;height:706px;background:#535353"></div><div class="a" style="left:753px;top:124px;width:253px;height:12px;background:#474747"></div><svg style="left:993px;top:127px" width="10" height="6"><path d="M1 0.5 L3.5 3 L1 5.5 M5.5 0.5 L8 3 L5.5 5.5" stroke="#cfcfcf" stroke-width="1.2" fill="none"/></svg><div class="a" style="left:753px;top:135px;width:253px;height:2px;background:#3a3a3a"></div><div class="a" style="left:753px;top:137px;width:253px;height:26px;background:#434343"></div><div class="a" style="left:754px;top:137px;width:76px;height:26px;background:#535353"></div><div class="a" style="left:830px;top:137px;width:1px;height:26px;background:#3e3e3e"></div><div class="a" style="left:943px;top:137px;width:1px;height:26px;background:#3e3e3e"></div><div class="t" style="left:766px;top:145.5px;font-size:10.5px;font-weight:bold;color:#f2f2f2">Propriétés</div><div class="t" style="left:843px;top:145.5px;font-size:10.5px;font-weight:bold;color:#a8a8a8">Bibliothèques CC</div><div class="a" style="left:1006px;top:124px;width:4px;height:706px;background:#4f4f4f"></div><div class="a" style="left:1005.5px;top:124px;width:1.5px;height:702px;background:#333"></div><div class="a" style="left:994px;top:163px;width:11px;height:647px;background:#4f4f4f"></div><svg style="left:995px;top:168px" width="10" height="6"><path d="M1 5 L5 1 L9 5" stroke="#7a7a7a" stroke-width="1" fill="none"/></svg><div class="a" style="left:995px;top:176px;width:9px;height:532px;background:#6a6a6a;border-radius:5px"></div><svg style="left:995px;top:800px" width="10" height="6"><path d="M1 1 L5 5 L9 1" stroke="#7a7a7a" stroke-width="1" fill="none"/></svg><div class="t" style="left:763px;top:176px;font-size:10.3px;color:#e8e8e8">Fichier lié</div><div class="a" style="left:753px;top:196px;width:241px;height:1px;background:#4a4a4a"></div><div class="t" style="left:763px;top:210px;font-size:10.3px;color:#e8e8e8">Transformation</div><div class="a" style="left:768px;top:240px;width:7px;height:7px;background:#f0f0f0"></div><div class="a" style="left:777px;top:240px;width:7px;height:7px;border:1px solid #cfcfcf"></div><div class="a" style="left:786px;top:240px;width:7px;height:7px;border:1px solid #cfcfcf"></div><div class="a" style="left:768px;top:249px;width:7px;height:7px;border:1px solid #cfcfcf"></div><div class="a" style="left:777px;top:249px;width:7px;height:7px;border:1px solid #cfcfcf"></div><div class="a" style="left:786px;top:249px;width:7px;height:7px;border:1px solid #cfcfcf"></div><div class="a" style="left:768px;top:258px;width:7px;height:7px;border:1px solid #cfcfcf"></div><div class="a" style="left:777px;top:258px;width:7px;height:7px;border:1px solid #cfcfcf"></div><div class="a" style="left:786px;top:258px;width:7px;height:7px;border:1px solid #cfcfcf"></div><div class="a" style="left:775px;top:243px;width:2px;height:1px;background:#cfcfcf"></div><div class="a" style="left:784px;top:243px;width:2px;height:1px;background:#cfcfcf"></div><div class="a" style="left:775px;top:252px;width:2px;height:1px;background:#cfcfcf"></div><div class="a" style="left:784px;top:252px;width:2px;height:1px;background:#cfcfcf"></div><div class="a" style="left:775px;top:261px;width:2px;height:1px;background:#cfcfcf"></div><div class="a" style="left:784px;top:261px;width:2px;height:1px;background:#cfcfcf"></div><div class="a" style="left:771px;top:247px;width:1px;height:2px;background:#cfcfcf"></div><div class="a" style="left:771px;top:256px;width:1px;height:2px;background:#cfcfcf"></div><div class="a" style="left:780px;top:247px;width:1px;height:2px;background:#cfcfcf"></div><div class="a" style="left:780px;top:256px;width:1px;height:2px;background:#cfcfcf"></div><div class="a" style="left:789px;top:247px;width:1px;height:2px;background:#cfcfcf"></div><div class="a" style="left:789px;top:256px;width:1px;height:2px;background:#cfcfcf"></div><div class="t" style="left:805px;top:235px;font-size:10.3px;color:#e8e8e8">X :</div><div class="t" style="left:805px;top:260px;font-size:10.3px;color:#e8e8e8">Y :</div><div class="a" style="left:822px;top:229px;width:55px;height:20px;background:#454545;border:1px solid #606060;border-radius:2px"></div><div class="t" style="left:827px;top:234px;font-size:11px;color:#e6e6e6">0 px</div><div class="a" style="left:822px;top:254px;width:55px;height:20px;background:#454545;border:1px solid #606060;border-radius:2px"></div><div class="t" style="left:826px;top:259px;font-size:11px;color:#e6e6e6">-0,019 px</div><div class="t" style="left:889px;top:235px;font-size:10.3px;color:#e8e8e8">I :</div><div class="t" style="left:885px;top:260px;font-size:10.3px;color:#e8e8e8">H :</div><div class="a" style="left:903px;top:229px;width:55px;height:20px;background:#454545;border:1px solid #606060;border-radius:2px;overflow:hidden"><div class="t" style="left:3px;top:4px;font-size:11px;color:#e6e6e6">834,722 px</div></div><div class="a" style="left:903px;top:254px;width:55px;height:20px;background:#454545;border:1px solid #606060;border-radius:2px;overflow:hidden"><div class="t" style="left:3px;top:4px;font-size:11px;color:#e6e6e6">555,841 px</div></div><svg style="left:960px;top:238px" width="28" height="28" viewBox="0 0 28 28"><path d="M11.3 13.2 L11.3 9.2 Q11.3 7.3 13.6 7.3 Q15.9 7.3 15.9 9.2 L15.9 13.5 M10.6 14.5 L10.6 18.6 Q10.6 20.6 13.1 20.6 Q15.5 20.6 15.5 18.8" stroke="#c8c8c8" stroke-width="1.6" fill="none"/><path d="M7.3 8.3 L19.1 19.8" stroke="#c8c8c8" stroke-width="1.6"/></svg><div class="a" style="left:973px;top:288px;width:4px;height:4px;border-radius:2px;background:#d0d0d0"></div><div class="a" style="left:978px;top:288px;width:4px;height:4px;border-radius:2px;background:#d0d0d0"></div><div class="a" style="left:983px;top:288px;width:4px;height:4px;border-radius:2px;background:#d0d0d0"></div><div class="a" style="left:753px;top:303px;width:241px;height:1px;background:#4a4a4a"></div><div class="t" style="left:763px;top:318px;font-size:10.3px;color:#e8e8e8">Aspect</div><svg style="left:764px;top:337px" width="17" height="17"><rect x="0" y="0" width="17" height="17" fill="#ffffff"/><path d="M0.5 16.5 L16.5 0.5" stroke="#e8141e" stroke-width="1.8"/></svg><div class="t" style="left:791px;top:343px;font-size:10.3px;color:#e8e8e8">Fond</div><svg style="left:764px;top:362px" width="17" height="17"><rect x="0" y="0" width="17" height="17" fill="#ffffff"/><rect x="4.25" y="4.25" width="8.5" height="8.5" fill="#535353"/><path d="M0.5 16.5 L16.5 0.5" stroke="#e8141e" stroke-width="1.8"/></svg><div class="t" style="left:791px;top:369px;font-size:10.3px;color:#e8e8e8"><u>Contour </u></div><div class="a" style="left:854px;top:362px;width:17px;height:21px;background:#4a4a4a;border:1px solid #606060;border-radius:2px"></div><svg style="left:858px;top:365px" width="9" height="14"><path d="M1 4.5 L4.5 1 L8 4.5 M1 9.5 L4.5 13 L8 9.5" stroke="#bdbdbd" stroke-width="1" fill="none"/></svg><div class="a" style="left:871px;top:362px;width:51px;height:21px;background:#454545;border:1px solid #606060;border-radius:2px"></div><div class="a" style="left:905px;top:362px;width:1px;height:21px;background:#606060"></div><div class="t" style="left:875px;top:368px;font-size:11px;color:#e6e6e6">0 pt</div><svg style="left:909px;top:370px" width="10" height="6"><path d="M1 1 L5 5 L9 1" stroke="#c8c8c8" stroke-width="1.2" fill="none"/></svg><div class="a" style="left:929px;top:362px;width:54px;height:21px;background:#454545;border:1px solid #606060;border-radius:2px"></div><div class="a" style="left:929px;top:362px;width:36px;height:21px;background:#e4e4e4;border-radius:2px 0 0 2px"></div><div class="a" style="left:933px;top:369px;width:27px;height:6px;background:#000"></div><svg style="left:969px;top:370px" width="10" height="6"><path d="M1 1 L5 5 L9 1" stroke="#c8c8c8" stroke-width="1.2" fill="none"/></svg><svg style="left:765px;top:390px" width="14" height="14" viewBox="0 0 14 14"><g fill="#3f88e0"><rect x="0" y="0" width="3.5" height="3.5"/><rect x="10.5" y="0" width="3.5" height="3.5"/><rect x="0" y="10.5" width="3.5" height="3.5"/><rect x="10.5" y="10.5" width="3.5" height="3.5"/></g><path d="M5 1.5 L9 1.5 M5 12.5 L9 12.5 M1.5 5 L1.5 9 M12.5 5 L12.5 9" stroke="#aaa" stroke-width="1" stroke-dasharray="1 1"/></svg><div class="t" style="left:791px;top:395px;font-size:10.3px;color:#e8e8e8"><u>Angle </u></div><div class="a" style="left:854px;top:388px;width:17px;height:21px;background:#4a4a4a;border:1px solid #606060;border-radius:2px"></div><svg style="left:858px;top:391px" width="9" height="14"><path d="M1 4.5 L4.5 1 L8 4.5 M1 9.5 L4.5 13 L8 9.5" stroke="#bdbdbd" stroke-width="1" fill="none"/></svg><div class="a" style="left:871px;top:388px;width:51px;height:21px;background:#454545;border:1px solid #606060;border-radius:2px"></div><div class="t" style="left:875px;top:394px;font-size:11px;color:#e6e6e6">12 px</div><div class="a" style="left:929px;top:388px;width:54px;height:21px;background:#454545;border:1px solid #606060;border-radius:2px"></div><div class="a" style="left:929px;top:388px;width:36px;height:21px;background:#e4e4e4;border-radius:2px 0 0 2px"></div><svg style="left:931px;top:391px" width="31" height="16" viewBox="0 0 31 16"><path d="M1 1 L29 1 L29 14" stroke="#333" stroke-width="1.6" fill="none"/></svg><svg style="left:969px;top:396px" width="10" height="6"><path d="M1 1 L5 5 L9 1" stroke="#c8c8c8" stroke-width="1.2" fill="none"/></svg><div class="a" style="left:765px;top:416px;width:14px;height:14px;border:1px solid #c0c0c0;background-color:#909090;background-image:linear-gradient(45deg,#5a5a5a 25%,transparent 25%,transparent 75%,#5a5a5a 75%),linear-gradient(45deg,#5a5a5a 25%,transparent 25%,transparent 75%,#5a5a5a 75%);background-size:4px 4px;background-position:0 0,2px 2px"></div><div class="t" style="left:791px;top:420.8px;font-size:10.3px;color:#e8e8e8"><u>Opacité </u></div><div class="a" style="left:854px;top:415px;width:68px;height:20px;background:#454545;border:1px solid #606060;border-radius:2px"></div><div class="a" style="left:905px;top:415px;width:1px;height:20px;background:#606060"></div><div class="t" style="left:857px;top:420px;font-size:11px;color:#e6e6e6">100 %</div><svg style="left:911px;top:421px" width="6" height="9"><path d="M1 1 L5 4.5 L1 8" stroke="#c8c8c8" stroke-width="1.1" fill="none"/></svg><svg style="left:767px;top:444px" width="16" height="14" viewBox="0 0 16 14"><rect x="1" y="1" width="11" height="11" stroke="#c0c0c0" stroke-width="1.4" fill="none" stroke-dasharray="2.5 1"/><rect x="13.5" y="12" width="1.5" height="1.5" fill="#c0c0c0"/></svg><div class="t" style="left:793px;top:444px;font-family:'Liberation Serif',serif;font-size:14px;color:#c0c0c0"><i>fx</i></div><div class="a" style="left:806px;top:456px;width:1.5px;height:1.5px;background:#c0c0c0"></div><div class="a" style="left:753px;top:469px;width:241px;height:1px;background:#4a4a4a"></div><div class="t" style="left:763px;top:484px;font-size:10.3px;color:#e8e8e8">Alignement</div><svg style="left:767px;top:505px" width="22" height="19" viewBox="0 0 22 19"><path d="M1 0 L1 18" stroke="#c8c8c8" stroke-width="1"/><path d="M4 2 L10 2 L13 5 L13 16 L4 16 Z" stroke="#c8c8c8" stroke-width="1.3" fill="none"/><rect x="6" y="8" width="4" height="2" fill="#c8c8c8"/><rect x="6" y="11" width="5" height="2" fill="#c8c8c8"/><path d="M16 14 L20 14 L18 16.5 Z" fill="#c8c8c8"/></svg><div class="a" style="left:797px;top:502px;width:1px;height:22px;background:#4e4e4e"></div><svg style="left:803px;top:505px" width="16" height="19" viewBox="0 0 16 19"><path d="M0.75 0 L0.75 19" stroke="#c8c8c8" stroke-width="1.3"/><rect x="3" y="2.5" width="8" height="6" fill="#c8c8c8"/><rect x="3" y="10.5" width="12" height="6" fill="#c8c8c8"/></svg><svg style="left:834px;top:505px" width="16" height="19" viewBox="0 0 16 19"><path d="M8 0 L8 19" stroke="#c8c8c8" stroke-width="1.3"/><rect x="4" y="2.5" width="8" height="6" fill="#c8c8c8"/><rect x="1.5" y="10.5" width="13" height="6" fill="#c8c8c8"/></svg><svg style="left:868px;top:505px" width="16" height="19" viewBox="0 0 16 19"><path d="M15.25 0 L15.25 19" stroke="#c8c8c8" stroke-width="1.3"/><rect x="5" y="2.5" width="8" height="6" fill="#c8c8c8"/><rect x="1" y="10.5" width="12" height="6" fill="#c8c8c8"/></svg><svg style="left:899px;top:505px" width="19" height="18" viewBox="0 0 19 18"><path d="M0 0.75 L19 0.75" stroke="#c8c8c8" stroke-width="1.3"/><rect x="2.5" y="3" width="6" height="13" fill="#c8c8c8"/><rect x="10.5" y="3" width="6" height="8" fill="#c8c8c8"/></svg><svg style="left:931px;top:505px" width="19" height="18" viewBox="0 0 19 18"><path d="M0 9 L19 9" stroke="#c8c8c8" stroke-width="1.3"/><rect x="2.5" y="2" width="6" height="14" fill="#c8c8c8"/><rect x="10.5" y="5" width="6" height="8" fill="#c8c8c8"/></svg><svg style="left:963px;top:505px" width="19" height="19" viewBox="0 0 19 19"><path d="M0 17.25 L19 17.25" stroke="#c8c8c8" stroke-width="1.3"/><rect x="2.5" y="1.5" width="6" height="14" fill="#c8c8c8"/><rect x="10.5" y="7" width="6" height="8.5" fill="#c8c8c8"/></svg><div class="a" style="left:753px;top:533px;width:241px;height:1px;background:#4a4a4a"></div><div class="t" style="left:763px;top:548px;font-size:10.3px;color:#e8e8e8">Habillage de texte</div><div class="a" style="left:764px;top:567px;width:22px;height:22px;background:#333333;border-radius:2px"></div><svg style="left:768px;top:570px" width="15" height="16" viewBox="0 0 15 16"><path d="M0 1h15M0 4h15M0 7h15M0 10h15M0 13h15" stroke="#c8c8c8" stroke-width="1.1"/><rect x="4" y="3" width="7" height="9" fill="none" stroke="#c8c8c8" stroke-width="1"/></svg><svg style="left:795px;top:570px" width="16" height="16" viewBox="0 0 16 16"><path d="M0 1h16M0 4h3M13 4h3M0 7h3M13 7h3M0 10h3M13 10h3M0 14h16" stroke="#c8c8c8" stroke-width="1.1"/><rect x="5" y="3" width="6" height="9" fill="none" stroke="#c8c8c8" stroke-width="1.2"/></svg><svg style="left:827px;top:567px" width="18" height="19" viewBox="0 0 18 19"><path d="M1 4h16M1 7h3M1 10h3M1 14h16" stroke="#c8c8c8" stroke-width="1.1"/><circle cx="9" cy="10" r="4" fill="#c8c8c8"/><circle cx="13" cy="4" r="3.2" fill="#3f88e0"/></svg><svg style="left:858px;top:570px" width="16" height="16" viewBox="0 0 16 16"><path d="M0 1h16M0 14h16" stroke="#c8c8c8" stroke-width="1.3"/><rect x="4" y="4" width="8" height="6" fill="#c8c8c8"/></svg><svg style="left:888px;top:570px" width="16" height="16" viewBox="0 0 16 16"><path d="M1 1h14M3 4h10" stroke="#c8c8c8" stroke-width="1.3"/><rect x="5" y="7" width="6" height="7" fill="#c8c8c8"/></svg><div class="a" style="left:914px;top:570px;width:12px;height:12px;border:1px solid #6a6a6a;border-radius:2px"></div><div class="t" style="left:933px;top:571px;font-size:11px;color:#808080">Inverser</div><div class="a" style="left:973px;top:603px;width:4px;height:4px;border-radius:2px;background:#d0d0d0"></div><div class="a" style="left:978px;top:603px;width:4px;height:4px;border-radius:2px;background:#d0d0d0"></div><div class="a" style="left:983px;top:603px;width:4px;height:4px;border-radius:2px;background:#d0d0d0"></div><div class="a" style="left:753px;top:618px;width:241px;height:1px;background:#4a4a4a"></div><div class="t" style="left:763px;top:633.5px;font-size:10.3px;color:#e8e8e8">Ajustement de bloc</div><svg style="left:818px;top:655px" width="16" height="16" viewBox="0 0 16 16"><rect x="2" y="2" width="12" height="12" fill="none" stroke="#c8c8c8" stroke-width="1.2"/><g fill="#c8c8c8"><circle cx="2" cy="2" r="1.7"/><circle cx="14" cy="2" r="1.7"/><circle cx="2" cy="14" r="1.7"/><circle cx="14" cy="14" r="1.7"/></g><path d="M5 5 L5 11 M11 5 L11 11" stroke="#c8c8c8" stroke-width="1.3"/></svg><svg style="left:842px;top:655px" width="16" height="16" viewBox="0 0 16 16"><rect x="2" y="2" width="12" height="12" fill="none" stroke="#c8c8c8" stroke-width="1.2"/><g fill="#c8c8c8"><circle cx="2" cy="2" r="1.7"/><circle cx="14" cy="2" r="1.7"/><circle cx="2" cy="14" r="1.7"/><circle cx="14" cy="14" r="1.7"/></g><rect x="3" y="3" width="6" height="5" fill="#c8c8c8"/><path d="M7.5 8.5 L7.5 12 M9 8.5 L12 8.5" stroke="#c8c8c8" stroke-width="1"/></svg><svg style="left:867px;top:655px" width="16" height="16" viewBox="0 0 16 16"><rect x="2" y="2" width="12" height="12" fill="none" stroke="#c8c8c8" stroke-width="1.2"/><g fill="#c8c8c8"><circle cx="2" cy="2" r="1.7"/><circle cx="14" cy="2" r="1.7"/><circle cx="2" cy="14" r="1.7"/><circle cx="14" cy="14" r="1.7"/></g><rect x="5" y="5" width="6" height="6" fill="#c8c8c8"/></svg><svg style="left:892px;top:655px" width="16" height="16" viewBox="0 0 16 16"><rect x="1.5" y="1.5" width="13" height="13" fill="none" stroke="#c8c8c8" stroke-width="1.1" stroke-dasharray="1.5 1"/><g fill="#c8c8c8"><circle cx="2" cy="2" r="1.7"/><circle cx="14" cy="2" r="1.7"/><circle cx="2" cy="14" r="1.7"/><circle cx="14" cy="14" r="1.7"/></g><rect x="3.5" y="3.5" width="9" height="9" fill="#c8c8c8"/></svg><div class="a" style="left:918px;top:652px;width:65px;height:20px;border:1px solid #6a6a6a;border-radius:2px"></div><div class="t" style="left:918px;top:658.5px;width:65px;text-align:center;font-size:10.3px;color:#e8e8e8">Options</div><div class="a" style="left:766px;top:688px;width:12px;height:12px;border:1px solid #6a6a6a;border-radius:2px"></div><div class="t" style="right:117px;top:689px;font-size:10.3px;color:#e8e8e8">Ajustement automatique</div><div class="a" style="left:753px;top:712px;width:241px;height:1px;background:#4a4a4a"></div><div class="t" style="left:763px;top:720px;font-size:10.3px;color:#e8e8e8">Sélections rapides</div><div class="a" style="left:763px;top:739px;width:105px;height:21px;border:1px solid #6a6a6a;border-radius:2px;font-size:10.3px;color:#e8e8e8;text-align:center;line-height:20px;white-space:nowrap">Convertir la forme</div><div class="a" style="left:878px;top:739px;width:105px;height:21px;border:1px solid #6a6a6a;border-radius:2px;font-size:10.3px;color:#e8e8e8;text-align:center;line-height:20px;white-space:nowrap">Organiser</div><div class="a" style="left:763px;top:770px;width:105px;height:21px;border:1px solid #6a6a6a;border-radius:2px;font-size:10.3px;color:#e8e8e8;text-align:center;line-height:20px;white-space:nowrap">Importer un fichier</div><div class="a" style="left:878px;top:770px;width:105px;height:21px;border:1px solid #6a6a6a;border-radius:2px;font-size:10.3px;color:#e8e8e8;text-align:center;line-height:20px;white-space:nowrap">Incorporer</div><div class="a" style="left:763px;top:801px;width:220px;height:21px;border:1px solid #6a6a6a;border-radius:2px;font-size:10.3px;color:#e8e8e8;text-align:center;line-height:20px;white-space:nowrap">Modifier avec</div><div class="a" style="left:753px;top:825px;width:254px;height:1.5px;background:#333"></div><div class="a" style="left:199px;top:59px;width:316px;height:790px;background:#f9f9f9;border:1px solid #e4e4e4;border-radius:4.5px;box-shadow:0 3px 8px rgba(0,0,0,0.10)"></div><div class="t" style="left:236px;top:67.8px;font-size:12px;color:#1a1a1a">Transformation</div><svg style="left:495px;top:67.7px" width="6" height="10"><path d="M1 1.2 L4.6 4.8 L1 8.4" stroke="#3c3c3c" stroke-width="1.4" fill="none"/></svg><div class="t" style="left:236px;top:91.1px;font-size:12px;color:#1a1a1a">Répéter la transformation</div><svg style="left:495px;top:91.0px" width="6" height="10"><path d="M1 1.2 L4.6 4.8 L1 8.4" stroke="#3c3c3c" stroke-width="1.4" fill="none"/></svg><div class="t" style="left:236px;top:114.5px;font-size:12px;color:#1a1a1a">Disposition</div><svg style="left:495px;top:114.4px" width="6" height="10"><path d="M1 1.2 L4.6 4.8 L1 8.4" stroke="#3c3c3c" stroke-width="1.4" fill="none"/></svg><div class="t" style="left:236px;top:137.8px;font-size:12px;color:#1a1a1a">Sélectionner</div><svg style="left:495px;top:137.7px" width="6" height="10"><path d="M1 1.2 L4.6 4.8 L1 8.4" stroke="#3c3c3c" stroke-width="1.4" fill="none"/></svg><div class="a" style="left:208px;top:157.4px;width:298px;height:1px;background:#e2e2e2"></div><div class="t" style="left:236px;top:168.5px;font-size:12px;color:#a3a3a3">Associer</div><div class="t" style="right:520px;top:168.5px;font-size:12px;color:#a3a3a3">Ctrl+G</div><div class="t" style="left:236px;top:191.8px;font-size:12px;color:#a3a3a3">Dissocier</div><div class="t" style="right:520px;top:191.8px;font-size:12px;color:#a3a3a3">Ctrl+Maj+G</div><div class="t" style="left:236px;top:215.2px;font-size:12px;color:#1a1a1a">Verrouiller</div><div class="t" style="right:520px;top:215.2px;font-size:12px;color:#1a1a1a">Ctrl+L</div><div class="t" style="left:236px;top:238.5px;font-size:12px;color:#a3a3a3">Tout déverrouiller sur la planche</div><div class="t" style="right:520px;top:238.5px;font-size:12px;color:#a3a3a3">Ctrl+Alt+L</div><div class="t" style="left:236px;top:261.8px;font-size:12px;color:#1a1a1a">Masquer</div><div class="t" style="right:520px;top:261.8px;font-size:12px;color:#1a1a1a">Ctrl+"</div><div class="t" style="left:236px;top:285.2px;font-size:12px;color:#a3a3a3">Tout afficher sur la planche</div><div class="t" style="right:520px;top:285.2px;font-size:12px;color:#a3a3a3">Ctrl+Alt+"</div><div class="a" style="left:208px;top:304.7px;width:298px;height:1px;background:#e2e2e2"></div><div class="t" style="left:236px;top:315.9px;font-size:12px;color:#1a1a1a">Insérer du code HTML...</div><div class="t" style="left:236px;top:339.2px;font-size:12px;color:#1a1a1a">Insérer une formule MathML...</div><div class="a" style="left:208px;top:358.8px;width:298px;height:1px;background:#e2e2e2"></div><div class="t" style="left:236px;top:370.0px;font-size:12px;color:#1a1a1a">Générer un code QR...</div><div class="t" style="left:236px;top:393.3px;font-size:12px;color:#1a1a1a">Extraire de l'image</div><svg style="left:495px;top:393.2px" width="6" height="10"><path d="M1 1.2 L4.6 4.8 L1 8.4" stroke="#3c3c3c" stroke-width="1.4" fill="none"/></svg><div class="a" style="left:208px;top:412.9px;width:298px;height:1px;background:#e2e2e2"></div><div class="t" style="left:236px;top:424.0px;font-size:12px;color:#a3a3a3">Options de bloc de texte...</div><div class="t" style="right:520px;top:424.0px;font-size:12px;color:#a3a3a3">Ctrl+B</div><div class="t" style="left:236px;top:447.4px;font-size:12px;color:#1a1a1a">Objet ancré</div><svg style="left:495px;top:447.2px" width="6" height="10"><path d="M1 1.2 L4.6 4.8 L1 8.4" stroke="#3c3c3c" stroke-width="1.4" fill="none"/></svg><div class="a" style="left:208px;top:466.9px;width:298px;height:1px;background:#e2e2e2"></div><div class="t" style="left:236px;top:478.1px;font-size:12px;color:#1a1a1a">Ajustement</div><svg style="left:495px;top:478.0px" width="6" height="10"><path d="M1 1.2 L4.6 4.8 L1 8.4" stroke="#3c3c3c" stroke-width="1.4" fill="none"/></svg><div class="t" style="left:236px;top:501.4px;font-size:12px;color:#1a1a1a">Contenu</div><svg style="left:495px;top:501.3px" width="6" height="10"><path d="M1 1.2 L4.6 4.8 L1 8.4" stroke="#3c3c3c" stroke-width="1.4" fill="none"/></svg><div class="a" style="left:208px;top:521.0px;width:298px;height:1px;background:#e2e2e2"></div><div class="t" style="left:236px;top:532.1px;font-size:12px;color:#1a1a1a">Effets</div><svg style="left:495px;top:532.0px" width="6" height="10"><path d="M1 1.2 L4.6 4.8 L1 8.4" stroke="#3c3c3c" stroke-width="1.4" fill="none"/></svg><div class="t" style="left:236px;top:555.5px;font-size:12px;color:#1a1a1a">Options d'arrondis...</div><div class="a" style="left:208px;top:575.0px;width:298px;height:1px;background:#e2e2e2"></div><div class="t" style="left:236px;top:586.2px;font-size:12px;color:#a3a3a3">Options de calque d'objet...</div><div class="t" style="left:236px;top:609.5px;font-size:12px;color:#1a1a1a">Options d'exportation d'objet...</div><div class="t" style="left:236px;top:632.9px;font-size:12px;color:#1a1a1a">Légendes</div><svg style="left:495px;top:632.8px" width="6" height="10"><path d="M1 1.2 L4.6 4.8 L1 8.4" stroke="#3c3c3c" stroke-width="1.4" fill="none"/></svg><div class="a" style="left:204px;top:649.6px;width:305.5px;height:23.2px;background:#f0f0f0;border-radius:4px"></div><div class="t" style="left:236px;top:656.2px;font-size:12px;color:#1a1a1a">Masque</div><svg style="left:495px;top:656.1px" width="6" height="10"><path d="M1 1.2 L4.6 4.8 L1 8.4" stroke="#3c3c3c" stroke-width="1.4" fill="none"/></svg><div class="t" style="left:236px;top:679.5px;font-size:12px;color:#1a1a1a">Couleurs de l'image...</div><div class="a" style="left:208px;top:699.1px;width:298px;height:1px;background:#e2e2e2"></div><div class="t" style="left:236px;top:710.2px;font-size:12px;color:#1a1a1a">Objet interactif</div><svg style="left:495px;top:710.2px" width="6" height="10"><path d="M1 1.2 L4.6 4.8 L1 8.4" stroke="#3c3c3c" stroke-width="1.4" fill="none"/></svg><div class="a" style="left:208px;top:729.8px;width:298px;height:1px;background:#e2e2e2"></div><div class="t" style="left:236px;top:741.0px;font-size:12px;color:#1a1a1a">Tracés</div><svg style="left:495px;top:740.9px" width="6" height="10"><path d="M1 1.2 L4.6 4.8 L1 8.4" stroke="#3c3c3c" stroke-width="1.4" fill="none"/></svg><div class="t" style="left:236px;top:764.3px;font-size:12px;color:#1a1a1a">Pathfinder</div><svg style="left:495px;top:764.2px" width="6" height="10"><path d="M1 1.2 L4.6 4.8 L1 8.4" stroke="#3c3c3c" stroke-width="1.4" fill="none"/></svg><div class="t" style="left:236px;top:787.6px;font-size:12px;color:#1a1a1a">Convertir la forme</div><svg style="left:495px;top:787.5px" width="6" height="10"><path d="M1 1.2 L4.6 4.8 L1 8.4" stroke="#3c3c3c" stroke-width="1.4" fill="none"/></svg><div class="t" style="left:236px;top:811.0px;font-size:12px;color:#1a1a1a">Convertir le point</div><svg style="left:495px;top:810.9px" width="6" height="10"><path d="M1 1.2 L4.6 4.8 L1 8.4" stroke="#3c3c3c" stroke-width="1.4" fill="none"/></svg><div class="a" style="left:512px;top:647px;width:317px;height:50px;background:#f9f9f9;border:1px solid #e4e4e4;border-radius:5px;box-shadow:0 3px 8px rgba(0,0,0,0.15)"></div><div class="a" style="left:516px;top:672.4px;width:309px;height:23px;background:#efefef;border-radius:4px"></div><div class="t" style="left:548px;top:656px;font-size:12px;color:#1a1a1a">Options...</div><div class="t" style="right:205px;top:656px;font-size:12px;color:#1a1a1a">Ctrl+Alt+Maj+K</div><div class="t" style="left:548px;top:679.3px;font-size:12px;color:#1a1a1a">Convertir le masque en bloc</div></body></html>
